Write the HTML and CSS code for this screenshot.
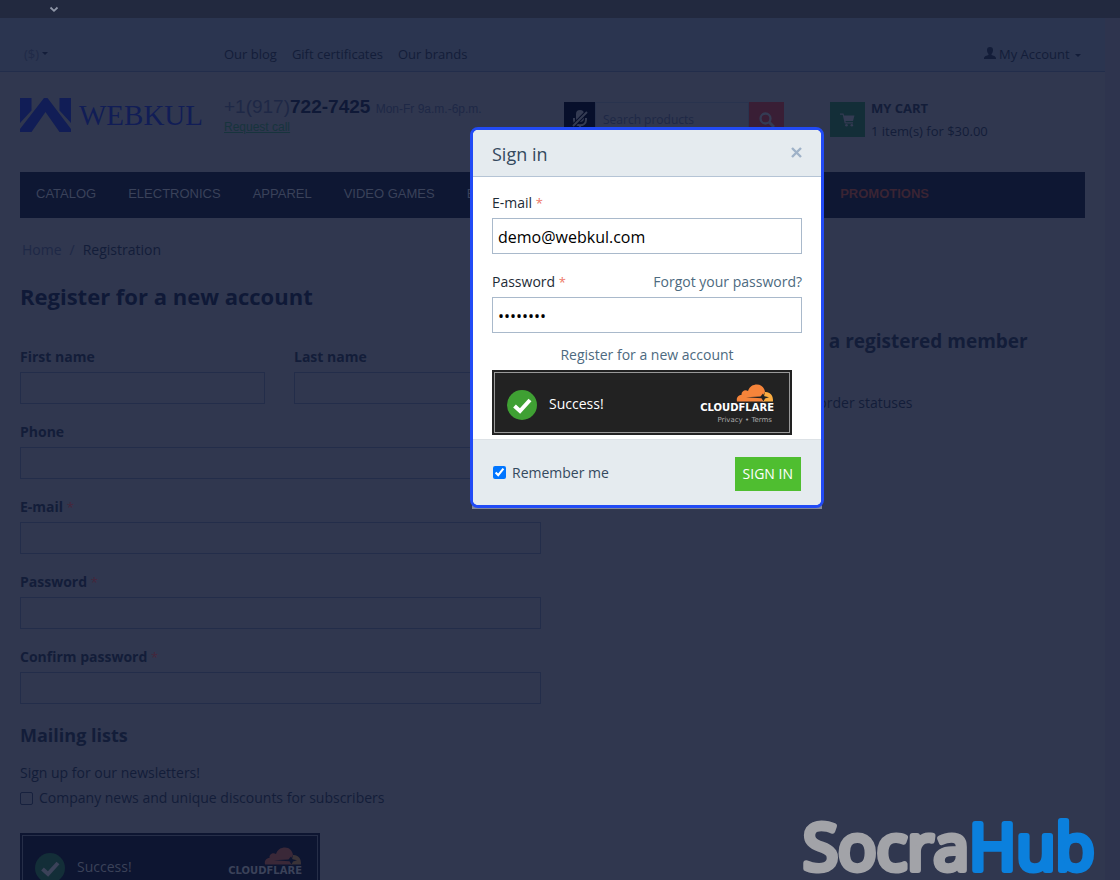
FILE: index.html
```html
<!DOCTYPE html>
<html lang="en">
<head>
    <meta charset="UTF-8">
    <meta name="viewport" content="width=device-width, initial-scale=1.0">
    <title>Registration</title>
    <link rel="stylesheet" href="styles.css">
</head>
<body>
    <svg class="sprite" aria-hidden="true">
        <symbol id="cloud" viewBox="0 0 38 18">
            <path class="cloud-main" d="M1 17.500C0 13.500 2.500 11 5.500 11C5 7.500 9 5 12 7C13.500 2.500 17 .5 21 .5C25.500 .5 28.500 4 29 8L27 12L28.500 17.500Z"/>
            <path class="cloud-side" d="M29 8C33.500 7.500 37.500 11 37 17.500H26.500L28 12Z"/>
            <path class="cloud-gap" d="M10 13.200L24.500 12.500L27 9.500L28.500 12.300L33 13.300L29 14.500L27.500 17.500L25.500 14.300Z"/>
        </symbol>
        <symbol id="tick" viewBox="0 0 30 30">
            <circle class="tick-disc" cx="15" cy="15" r="15"/>
            <path class="tick-mark" d="M7.500 16L13 21L23 10"/>
        </symbol>
    </svg>

    <div class="top-strip">
        <svg width="10" height="7" viewBox="0 0 10 7"><path d="M1.500 1.500L5 4.800L8.500 1.500" fill="none" stroke="currentColor" stroke-width="1.800"/></svg>
    </div>

    <div class="page">
        <div class="top-bar">
            <button class="currency" type="button">($) <span class="caret"></span></button>
            <nav class="top-links">
                <a href="#">Our blog</a>
                <a href="#">Gift certificates</a>
                <a href="#">Our brands</a>
            </nav>
            <button class="account" type="button">
                <svg width="12" height="12" viewBox="0 0 12 12"><path fill="currentColor" d="M6 0C8 0 9 1.300 9 3C9 5 8.200 6.300 7.500 7V8C9 8.800 12 9 12 11.500V12H0V11.500C0 9 3 8.800 4.500 8V7C3.800 6.300 3 5 3 3C3 1.300 4 0 6 0Z"/></svg>
                My Account <span class="caret"></span>
            </button>
        </div>

        <header class="header">
            <a class="logo" href="#">
                <svg width="51" height="34" viewBox="0 0 51 34"><path fill="currentColor" d="M0 0H11.500V12.500L0 25ZM51 0H39.500V12.500L51 25ZM24 0H27.500L51 31V34H39.500L25.500 14L11.500 34H0V31Z"/></svg>
                WEBKUL
            </a>
            <div class="phone">
                <div><span class="phone-number">+1(917)<b>722-7425</b></span> Mon-Fr 9a.m.-6p.m.</div>
                <a href="#">Request call</a>
            </div>
            <form class="search">
                <button class="mic" type="button" aria-label="Voice search">
                    <svg width="16" height="20" viewBox="0 0 16 20" fill="none" stroke="currentColor" stroke-width="2"><rect x="5" y="1" width="6" height="10" rx="3" fill="currentColor"/><path d="M2 8V10C2 17 14 17 14 10V8M8 15V19M4 19H12"/><path d="M15 2L1 16" stroke="#070f2b" stroke-width="4"/><path d="M15 2L1 16"/></svg>
                </button>
                <input type="text" placeholder="Search products" aria-label="Search products">
                <button class="find" type="submit" aria-label="Search">
                    <svg width="16" height="16" viewBox="0 0 16 16" fill="none" stroke="currentColor" stroke-width="2.300"><circle cx="6.500" cy="6.500" r="5"/><path d="M10 10L15 15" stroke-width="3"/></svg>
                </button>
            </form>
            <a class="cart" href="#">
                <span class="cart-icon">
                    <svg width="15" height="14" viewBox="0 0 15 14" fill="currentColor"><path d="M0 .5H3.500L4 2.500H14.500L13 8H5.500L5.800 9.300H13V10.500H4.700L2.700 1.800H0Z"/><circle cx="6.500" cy="12.300" r="1.300"/><circle cx="11.800" cy="12.300" r="1.300"/></svg>
                </span>
                <span><b>MY CART</b><br>1 item(s) for $30.00</span>
            </a>
        </header>

        <nav class="menu">
            <a href="#">CATALOG</a>
            <a href="#">ELECTRONICS</a>
            <a href="#">APPAREL</a>
            <a href="#">VIDEO GAMES</a>
            <a href="#">BOOKS</a>
            <a class="promo" href="#">PROMOTIONS</a>
        </nav>

        <div class="breadcrumbs"><a href="#">Home</a><span>/</span>Registration</div>

        <main class="content">
            <form class="register">
                <h1>Register for a new account</h1>
                <div class="names">
                    <div class="field">
                        <label for="firstName">First name</label>
                        <input type="text" id="firstName">
                    </div>
                    <div class="field">
                        <label for="lastName">Last name</label>
                        <input type="text" id="lastName">
                    </div>
                </div>
                <div class="field">
                    <label for="phone">Phone</label>
                    <input type="text" id="phone">
                </div>
                <div class="field">
                    <label for="email">E-mail <i>*</i></label>
                    <input type="email" id="email">
                </div>
                <div class="field">
                    <label for="password">Password <i>*</i></label>
                    <input type="password" id="password">
                </div>
                <div class="field">
                    <label for="confirm">Confirm password <i>*</i></label>
                    <input type="password" id="confirm">
                </div>
                <h2>Mailing lists</h2>
                <p>Sign up for our newsletters!</p>
                <label class="news"><input type="checkbox"> Company news and unique discounts for subscribers</label>
                <div class="captcha captcha-dim">
                    <svg class="tick" width="30" height="30"><use href="#tick"/></svg>
                    <span>Success!</span>
                    <div class="captcha-brand">
                        <svg width="38" height="18"><use href="#cloud"/></svg>
                        <b>CLOUDFLARE</b>
                        <small><a href="#">Privacy</a> • <a href="#">Terms</a></small>
                    </div>
                </div>
            </form>
            <aside class="benefits">
                <h2>Benefits of being a registered member</h2>
                <p>Check your order statuses</p>
            </aside>
        </main>
    </div>

    <div class="dialog" role="dialog" aria-labelledby="dialogTitle">
        <form>
            <div class="dialog-head">
                <h3 id="dialogTitle">Sign in</h3>
                <button type="button" aria-label="Close">
                    <svg width="11" height="11" viewBox="0 0 11 11"><path d="M1 1L10 10M10 1L1 10" stroke="currentColor" stroke-width="2.400"/></svg>
                </button>
            </div>
            <div class="dialog-body">
                <div class="label-row"><label for="loginEmail">E-mail <i>*</i></label></div>
                <input type="email" id="loginEmail" value="demo@webkul.com">
                <div class="label-row">
                    <label for="loginPassword">Password <i>*</i></label>
                    <a href="#">Forgot your password?</a>
                </div>
                <input type="password" id="loginPassword" value="password">
                <a class="register-link" href="#">Register for a new account</a>
                <div class="captcha">
                    <svg class="tick" width="30" height="30"><use href="#tick"/></svg>
                    <span>Success!</span>
                    <div class="captcha-brand">
                        <svg width="38" height="18"><use href="#cloud"/></svg>
                        <b>CLOUDFLARE</b>
                        <small><a href="#">Privacy</a> • <a href="#">Terms</a></small>
                    </div>
                </div>
            </div>
            <div class="dialog-foot">
                <label><input type="checkbox" checked> Remember me</label>
                <button type="submit">SIGN IN</button>
            </div>
        </form>
    </div>

    <svg class="watermark" width="304" height="72">
        <text x="3" y="62">Socra<tspan>Hub</tspan></text>
    </svg>
</body>
</html>
```
FILE: styles.css
```css
* {
    box-sizing: border-box;
}
body {
    margin: 0;
    height: 100vh;
    overflow: hidden;
    background: #30374f;
    color: #131d39;
    font: 14px/20px "Open Sans", sans-serif;
}
a {
    color: inherit;
    text-decoration: none;
}
button, input {
    font: inherit;
    color: inherit;
}
button {
    border: 0;
    padding: 0;
    background: none;
    cursor: pointer;
}
h1, h2, h3, p {
    margin: 0;
}
i {
    font-size: 13px;
    font-style: normal;
    font-weight: normal;
}
.sprite {
    position: absolute;
    width: 0;
    height: 0;
}

/* header */
.top-strip {
    display: flex;
    align-items: center;
    height: 18px;
    padding-left: 49px;
    background: #22293f;
    color: #9097a8;
}
.page {
    min-height: calc(100vh - 18px);
    border-right: 15px solid #2e344e;
}
.top-bar, .header {
    display: grid;
    grid-template-columns: 204fr 340fr 266fr 255fr;
    padding: 0 20px;
}
.top-bar {
    align-items: center;
    height: 54px;
    padding-top: 18px;
    border-bottom: 1px solid #222d4b;
    background: #2b3550;
    font-size: 13px;
}
.currency {
    justify-self: start;
    padding-left: 4px;
    color: #202a47;
}
.caret {
    display: inline-block;
    border: 3px solid transparent;
    border-top-color: #131d39;
    border-bottom: 0;
    vertical-align: 4px;
}
.top-links {
    display: flex;
    gap: 15px;
}
.account {
    grid-column: 4;
    justify-self: end;
    padding-right: 4px;
}
.account .caret {
    margin-left: 2px;
    vertical-align: 2px;
}
.header {
    height: 100px;
    padding-top: 26px;
}
.logo {
    display: flex;
    align-items: center;
    align-self: start;
    gap: 8px;
    color: #111d56;
    font: 29px/34px "Liberation Serif", serif;
}
.phone {
    color: #1e2846;
    font: 12px/18px "Liberation Sans", Arial, sans-serif;
}
.phone-number {
    margin-right: 2px;
    font-size: 19px;
}
.phone b {
    color: #0f1937;
}
.phone a {
    color: #17343d;
    text-decoration: underline;
}
.search {
    display: flex;
    width: 220px;
    height: 35px;
    margin-top: 4px;
    font-size: 12px;
}
.search button {
    display: grid;
    place-items: center;
    color: #343b53;
}
.search .mic {
    width: 31px;
    background: #070f2b;
}
.search .find {
    width: 35px;
    background: #391e35;
}
.search input {
    flex: 1;
    min-width: 0;
    padding: 0 7px;
    border: 1px solid #29334e;
    background: none;
}
.search input::placeholder {
    color: #1e2846;
}
.cart {
    display: flex;
    gap: 6px;
    margin-top: -1px;
    font-size: 13px;
    line-height: 23px;
}
.cart-icon {
    display: grid;
    place-items: center;
    width: 35px;
    height: 35px;
    margin-top: 5px;
    background: #132e38;
    color: #343b53;
}
.menu {
    display: flex;
    gap: 32px;
    height: 46px;
    margin: 0 20px;
    padding: 0 16px;
    background: #0e1733;
    color: #3a425a;
    font: 13px/43px "Liberation Sans", Arial, sans-serif;
}
.menu .promo {
    margin-left: auto;
    margin-right: 140px;
    color: #3a2433;
    font-weight: bold;
}
.breadcrumbs {
    display: flex;
    gap: 8px;
    padding: 22px 22px 0;
}
.breadcrumbs a, .breadcrumbs span {
    color: #1e2846;
}

/* registration form */
.content {
    display: grid;
    grid-template-columns: 521fr 421fr;
    gap: 123px;
    padding: 21px 20px 0;
}
.register h1 {
    margin-bottom: 36px;
    color: #0f1937;
    font-size: 22px;
    line-height: 30px;
}
.names {
    display: grid;
    grid-template-columns: 245fr 247fr;
    gap: 29px;
}
.field label {
    display: block;
    height: 20px;
    margin-bottom: 5px;
    font-weight: bold;
}
.field i {
    color: #46263b;
}
.field input {
    display: block;
    width: 100%;
    height: 32px;
    margin-bottom: 18px;
    border: 1px solid #232d4a;
    background: none;
}
.register h2 {
    margin: 18px 0 15px;
    font-size: 18px;
    line-height: 26px;
}
.news {
    display: flex;
    align-items: center;
    gap: 6px;
    margin: 5px 0 25px;
}
.news input {
    appearance: none;
    width: 13px;
    height: 13px;
    margin: 0;
    border: 1px solid #17213e;
    border-radius: 2px;
}
.benefits {
    padding-top: 47px;
}
.benefits h2 {
    margin-bottom: 39px;
    font-size: 19px;
    line-height: 26px;
}
.benefits p {
    padding-left: 78px;
}

/* captcha box */
.captcha {
    display: flex;
    align-items: center;
    gap: 12px;
    width: 300px;
    height: 65px;
    padding: 4px 18px 0 15px;
    outline: 1px solid #999;
    outline-offset: -3px;
    background: #222;
    color: #fff;
}
.captcha span {
    font-size: 14px;
    line-height: 18px;
    padding-bottom: 2px;
}
.tick-disc {
    fill: var(--disc, #3fa033);
}
.tick-mark {
    fill: none;
    stroke: currentColor;
    stroke-width: 4;
}
.cloud-main {
    fill: var(--cloud, #f6843a);
}
.cloud-side {
    fill: var(--cloud-side, #fbad41);
}
.cloud-gap {
    fill: var(--gap, #222);
}
.captcha-brand {
    display: flex;
    flex-direction: column;
    align-items: flex-end;
    margin-left: auto;
}
.captcha-brand b {
    font: bold 10px/12px "DejaVu Sans", sans-serif;
}
.captcha-brand small {
    padding-right: 2px;
    color: #aaa;
    font: 7px/12px "DejaVu Sans", sans-serif;
}
.captcha-dim {
    --disc: #132e38;
    --cloud: #3a2838;
    --cloud-side: #3a3338;
    --gap: #0d1531;
    outline-color: #262e48;
    background: #0d1531;
    color: #3b4259;
}
.captcha-dim small {
    color: #2c344d;
}

/* sign in dialog */
.dialog {
    position: absolute;
    top: 127px;
    left: 470px;
    width: 354px;
    border: 3px solid #224bf5;
    border-radius: 8px;
    background: #fff;
}
.dialog::before {
    content: "";
    position: absolute;
    z-index: -1;
    left: -1px;
    right: -1px;
    bottom: -4px;
    height: 20px;
    background: #82889a;
}
.dialog-head {
    display: flex;
    align-items: center;
    justify-content: space-between;
    height: 47px;
    padding: 0 19px;
    border-bottom: 1px solid #b5c4d5;
    border-radius: 5px 5px 0 0;
    background: #e5ebef;
}
.dialog-head h3 {
    padding-top: 2px;
    color: #34495e;
    font-size: 18px;
    font-weight: normal;
}
.dialog-head button {
    color: #9fb2c8;
}
.dialog-body {
    padding: 16px 19px 4px;
}
.label-row {
    display: flex;
    justify-content: space-between;
    height: 20px;
    margin-bottom: 5px;
    color: #1d2b36;
}
.label-row i {
    color: #ee7766;
}
.label-row a, .register-link {
    color: #4d6a80;
}
.dialog-body input {
    display: block;
    width: 100%;
    height: 36px;
    margin-bottom: 18px;
    padding: 2px 5px 0;
    border: 1px solid #a9b9cb;
    background: #fff;
    color: #000;
    font-size: 16px;
}
.dialog-body .register-link {
    display: block;
    margin: -6px 0 5px;
    text-align: center;
}
.dialog-foot {
    display: flex;
    align-items: center;
    justify-content: space-between;
    height: 66px;
    padding: 2px 20px 0;
    border-top: 1px solid #dde2e6;
    border-radius: 0 0 5px 5px;
    background: #e5ebef;
}
.dialog-foot label {
    display: flex;
    align-items: center;
    gap: 6px;
    padding-bottom: 2px;
    color: #34495e;
}
.dialog-foot input {
    width: 13px;
    height: 13px;
    margin: 0;
}
.dialog-foot button {
    height: 34px;
    padding: 0 8px;
    background: #4fbe30;
    color: #fff;
}

.watermark {
    position: fixed;
    right: 16px;
    bottom: 0;
    fill: #a2a3a8;
    stroke: #a2a3a8;
    stroke-width: 6;
    stroke-linejoin: round;
    font-size: 64px;
}
.watermark tspan {
    fill: #0b80dd;
    stroke: #0b80dd;
}
```
